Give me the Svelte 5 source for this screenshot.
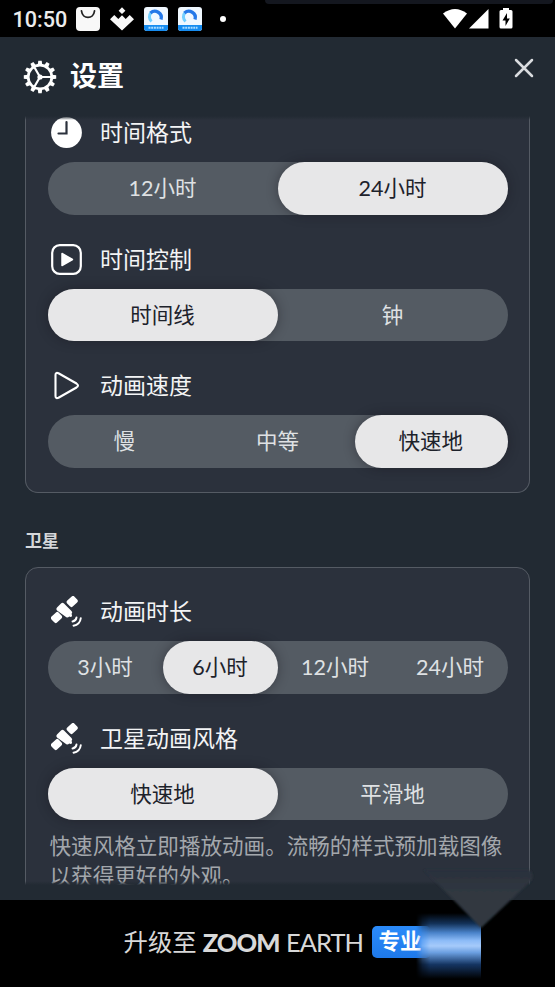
<script>
  let timeSettings = [
    { icon: "clock", label: "时间格式", options: ["12小时", "24小时"], selected: 1 },
    { icon: "control", label: "时间控制", options: ["时间线", "钟"], selected: 0 },
    { icon: "play", label: "动画速度", options: ["慢", "中等", "快速地"], selected: 2 }
  ];
  let satelliteSettings = [
    { icon: "satellite", label: "动画时长", options: ["3小时", "6小时", "12小时", "24小时"], selected: 1 },
    {
      icon: "satellite",
      label: "卫星动画风格",
      options: ["快速地", "平滑地"],
      selected: 0,
      note: "快速风格立即播放动画。流畅的样式预加载图像以获得更好的外观。"
    }
  ];
  let groups = [
    { title: "", settings: timeSettings },
    { title: "卫星", settings: satelliteSettings }
  ];
  const teeth = Array.from({ length: 12 }, (_, i) => i * 30);

  function select(setting, index) {
    setting.selected = index;
    groups = groups;
  }
</script>

<style>
  :global(body) {
    background: #000;
  }
  .screen {
    position: relative;
    width: 555px;
    height: 987px;
    display: flex;
    flex-direction: column;
    overflow: hidden;
    background: #000;
    color: #fff;
    font-family: Lato, "Noto Sans CJK SC", sans-serif;
  }
  svg {
    display: block;
    flex: none;
  }

  .status {
    height: 37px;
    box-sizing: border-box;
    padding: 1px 42px 0 12.5px;
    display: flex;
    align-items: center;
    font: 500 21.6px Roboto, sans-serif;
    color: #ececec;
  }
  .status .clock {
    width: 63.5px;
  }
  .notifications {
    display: flex;
    align-items: center;
    gap: 10px;
  }
  .dot {
    width: 6px;
    height: 6px;
    margin-left: 8px;
    border-radius: 50%;
    background: #fff;
  }
  .signals {
    margin-left: auto;
    display: flex;
    align-items: center;
  }
  .notch {
    position: absolute;
    top: 0;
    left: 265px;
    width: 288px;
    height: 4px;
    border-radius: 0 0 5px 5px;
    background: #14171f;
  }

  .dialog {
    height: 863px;
    display: flex;
    flex-direction: column;
    background: #222a33;
  }
  header {
    height: 79px;
    box-sizing: border-box;
    padding: 0 20px 0 23px;
    display: flex;
    align-items: center;
  }
  h1 {
    margin: -1px 0 0 13px;
    font-size: 27px;
    line-height: 40px;
    font-weight: 700;
  }
  .close {
    margin: -17px 0 0 auto;
    padding: 0;
    border: 0;
    background: none;
  }

  .scroll {
    position: relative;
    height: 769px;
    overflow: hidden;
  }
  .scroll::before,
  .scroll::after {
    content: "";
    position: absolute;
    z-index: 2;
    left: 0;
    right: 0;
    height: 4px;
  }
  .scroll::before {
    top: 0;
    background: linear-gradient(#222a33, #222a3300);
  }
  .scroll::after {
    bottom: 0;
    background: linear-gradient(#222a3300, #222a33);
  }
  h2 {
    margin: 35px 0 13.7px 25px;
    font-size: 17px;
    line-height: 25px;
    font-weight: 700;
    color: #d5d7da;
  }
  .card {
    margin: 0 25px;
    padding: 29px 22px 24.5px;
    display: flex;
    flex-direction: column;
    gap: 29.5px;
    border: 1px solid #555b64;
    border-radius: 13px;
    background: #2b313c;
  }
  .card.continued {
    padding-top: 1.5px;
    border-top: 0;
    border-radius: 0 0 13px 13px;
  }
  .label {
    height: 30px;
    margin-bottom: 14.5px;
    padding-left: 3px;
    display: flex;
    align-items: center;
    gap: 18px;
    font-size: 23px;
    line-height: 30px;
    color: #f3f4f5;
  }
  .label span {
    margin-top: -1px;
  }
  .segments {
    display: flex;
    width: 460px;
    height: 52.5px;
    border-radius: 27px;
    background: #545b63;
  }
  .segments button {
    flex: 1;
    padding: 0 1px 3px 0;
    border: 0;
    border-radius: 27px;
    background: none;
    color: #dfe1e3;
    font: 400 21.5px Lato, "Noto Sans CJK SC", sans-serif;
  }
  .segments button.active {
    background: #e7e7e8;
    color: #1d222b;
    box-shadow: 0 0 12px rgba(20, 18, 24, 0.4);
  }
  .note {
    width: 456px;
    margin: 11px 0 0 1.5px;
    font-size: 21.57px;
    line-height: 30px;
    color: #a3a7ac;
  }

  footer {
    flex: 1;
    display: flex;
    align-items: center;
    padding: 0 0 4px 123.5px;
    font-size: 24.4px;
    line-height: 36px;
    color: #d8d8d8;
    white-space: nowrap;
  }
  .brand {
    margin-left: 6px;
    font-size: 25.5px;
    letter-spacing: -0.98px;
  }
  .brand b {
    font-weight: 900;
    margin-right: 1px;
  }
  .pro {
    width: 52px;
    height: 32px;
    margin-left: 8.5px;
    padding-left: 7px;
    border-radius: 5px;
    overflow: hidden;
    background: linear-gradient(#2b8bfa, #1e79ea);
    color: #fff;
    font-size: 21.5px;
    font-weight: 700;
    line-height: 31px;
  }
  .pointer {
    position: absolute;
    z-index: 3;
    left: 405px;
    top: 860px;
    pointer-events: none;
  }
</style>

<div class="screen">
  <div class="status">
    <span class="clock">10:50</span>
    <div class="notifications">
      <svg width="24" height="24" viewBox="0 0 24 24">
        <rect width="24" height="24" rx="4" fill="#f8f8f8" />
        <path d="M5.5 4c1 8.5 12 8.5 13 0" fill="none" stroke="#222" stroke-width="1.8" stroke-linecap="round" />
      </svg>
      <svg width="24" height="24" viewBox="0 0 24 24" fill="#f8f8f8">
        <path d="M12 .3l3.4 3.4L12 7.1 8.6 3.7zM4.3 8l4 4L12 8.3l3.7 3.7 4-4L24 12.2 12 23.6 0 12.2z" />
      </svg>
      {#each [0, 1] as app (app)}
        <svg width="24" height="24" viewBox="0 0 24 24">
          <rect width="24" height="24" rx="3" fill="#f0f8ff" />
          <path d="M0 18h24v3a3 3 0 0 1-3 3H3a3 3 0 0 1-3-3z" fill="#168cf0" />
          <path d="M7.5 14.5A6.5 6.5 0 0 1 7 5.500" fill="none" stroke="#72cfff" stroke-width="3" />
          <path d="M6.5 6A6.4 6.4 0 0 1 17 12.500" fill="none" stroke="#2478e8" stroke-width="3.3" />
          <path d="M4.5 20.8h15" stroke="#a9dcff" stroke-width="2" stroke-dasharray="2 .7" />
        </svg>
      {/each}
      <i class="dot"></i>
    </div>
    <div class="signals">
      <svg width="70" height="24" viewBox="0 0 70 24" fill="#fff">
        <path d="M0 6.5Q12 -2.5 24 6.5L12 21.5z" />
        <path d="M45.5 2v19.5H26z" />
        <path d="M60 1h6v2h2q1.500 0 1.500 1.500V20q0 1.500-1.500 1.500H58q-1.500 0-1.500-1.500V4.500Q56.500 3 58 3h2z" />
        <path d="M64 6l-4.500 7.500h3V19l4.300-7.500h-2.800z" fill="#000" />
      </svg>
    </div>
  </div>
  <div class="notch"></div>

  <main class="dialog">
    <header>
      <svg width="34" height="34" viewBox="-17 -17 34 34" fill="none" stroke="#fff">
        {#each teeth as angle}
          <path d="M-2.3 -12l.6-4.200h3.400l.6 4.200z" fill="#fff" stroke="none" transform="rotate({angle})" />
        {/each}
        <circle r="11.8" stroke-width="2.7" />
        <circle r="2.6" fill="#fff" stroke="none" />
        <path d="M0 0h11M0 0L-5.5 -9.5M0 0L-5.5 9.5" stroke-width="2.2" />
      </svg>
      <h1>设置</h1>
      <button class="close" aria-label="关闭">
        <svg width="22" height="22" viewBox="0 0 22 22">
          <path d="M3 3l16 16M19 3L3 19" stroke="#dadcdf" stroke-width="2.5" stroke-linecap="round" />
        </svg>
      </button>
    </header>

    <div class="scroll">
      {#each groups as group}
        {#if group.title}<h2>{group.title}</h2>{/if}
        <section class="card" class:continued={!group.title}>
          {#each group.settings as setting}
            <div>
              <div class="label">
                <svg width="31" height="31" viewBox="0 0 31 31" fill="none" stroke="#fff">
                  {#if setting.icon === "clock"}
                    <circle cx="15.5" cy="15.5" r="15.4" fill="#fff" stroke="none" />
                    <path d="M15.5 5v11.5H7.5" stroke="#2b313c" stroke-width="2.2" stroke-linecap="round" />
                  {:else if setting.icon === "control"}
                    <rect x="1.2" y="1.2" width="28.6" height="28.6" rx="7.5" stroke-width="2.2" />
                    <path d="M11 9.5v12l10.5-6z" fill="#fff" stroke-width="1.5" stroke-linejoin="round" />
                  {:else if setting.icon === "play"}
                    <path d="M4.5 5v21q0 3 3 1.700l18-10.200q3-2 0-4l-18-10.200q-3-1.300-3 1.700z" stroke-width="2.1" />
                  {:else}
                    <g fill="#fff" stroke="none">
                      <rect x="-5" y="-4" width="10" height="8" rx="2" transform="translate(21.2 5.5) rotate(-43)" />
                      <path d="M6 11.500l4-4q1.500-1.400 3 0l7.500 7.500q1.500 1.500 0 3l.5 1q.5 2-1.500 2l-1.200-.5q-2 2-4 0L6 14.500q-1.500-1.500 0-3z" />
                      <rect x="-5" y="-4" width="10" height="8" rx="2" transform="translate(5.5 21.5) rotate(-43)" />
                    </g>
                    <path d="M21.500 25.500q3.500-.5 4-4M22.500 29.700q6.500-1 7.300-7.500" stroke-width="1.9" stroke-linecap="round" />
                  {/if}
                </svg>
                <span>{setting.label}</span>
              </div>
              <div class="segments">
                {#each setting.options as option, i}
                  <button class:active={setting.selected === i} on:click={() => select(setting, i)}>{option}</button>
                {/each}
              </div>
              {#if setting.note}<p class="note">{setting.note}</p>{/if}
            </div>
          {/each}
        </section>
      {/each}
    </div>
  </main>

  <footer>
    <span>升级至</span>
    <span class="brand"><b>ZOOM</b> EARTH</span>
    <span class="pro">专业</span>
  </footer>

  <svg class="pointer" width="150" height="127" viewBox="0 0 150 127">
    <defs>
      <linearGradient id="panel" x2="0" y2="1">
        <stop offset="0" stop-color="#2b313c" />
        <stop offset=".4" stop-color="#303841" />
        <stop offset="1" stop-color="#303a42" />
      </linearGradient>
      <linearGradient id="glow" x2="0" y2="1">
        <stop offset="0" stop-color="#000" />
        <stop offset=".16" stop-color="#133259" />
        <stop offset=".3" stop-color="#4a83ca" />
        <stop offset=".42" stop-color="#8dbcf8" />
        <stop offset=".5" stop-color="#a5cafa" />
        <stop offset=".6" stop-color="#6b9fe0" />
        <stop offset=".78" stop-color="#153562" />
        <stop offset="1" stop-color="#000" />
      </linearGradient>
      <linearGradient id="fade">
        <stop offset="0" stop-color="#000" />
        <stop offset=".1" stop-color="#999" />
        <stop offset=".22" stop-color="#fff" />
      </linearGradient>
      <mask id="edge"><rect x="11" y="40" width="65" height="87" fill="url(#fade)" /></mask>
      <filter id="soft" x="-20%" y="-20%" width="140%" height="140%"><feGaussianBlur stdDeviation="1" /></filter>
    </defs>
    <rect x="11" y="53" width="65" height="66" fill="url(#glow)" mask="url(#edge)" />
    <path d="M19 10H124Q130 14 126 21L76 68Z" fill="url(#panel)" filter="url(#soft)" />
  </svg>
</div>
